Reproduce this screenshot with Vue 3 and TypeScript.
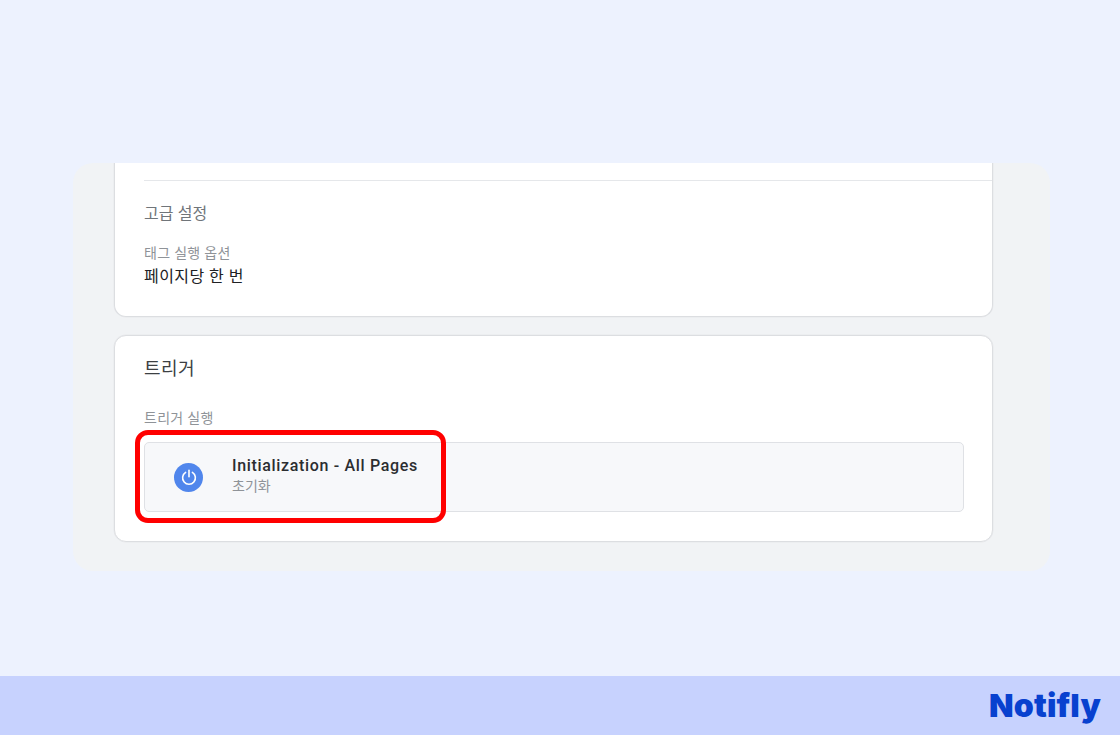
<script setup lang="ts">
const title: string = 'Initialization - All Pages'
</script>

<template>
  <div class="page">
    <main class="main">
      <section class="panel">
        <div class="card first">
          <div class="divider"></div>
          <h3 class="sub">고급 설정</h3>
          <div class="label opt">태그 실행 옵션</div>
          <div class="value">페이지당 한 번</div>
        </div>
        <div class="card second">
          <h2 class="heading">트리거</h2>
          <div class="label run">트리거 실행</div>
          <div class="row">
            <span class="badge">
              <svg width="18" height="18" viewBox="0 0 18 18" fill="none" stroke="#fff" stroke-width="1.6" stroke-linecap="round">
                <path d="M9 2.4v6.4" />
                <path d="M5.6 4.4a6.4 6.4 0 1 0 6.8 0" />
              </svg>
            </span>
            <div class="text">
              <div class="name">{{ title }}</div>
              <div class="type">초기화</div>
            </div>
            <div class="mark"></div>
          </div>
        </div>
      </section>
    </main>
    <footer class="footer">
      <span class="logo">Notifly</span>
    </footer>
  </div>
</template>

<style scoped>
.page {
  width: 1120px;
  height: 735px;
  display: flex;
  flex-direction: column;
  background: #edf2fe;
  font-family: Roboto, "Noto Sans CJK KR", sans-serif;
  overflow: hidden;
}
.main {
  flex: 1;
  padding: 163px 70px 0 73px;
}
.panel {
  height: 408px;
  box-sizing: border-box;
  background: #f1f3f5;
  border-radius: 20px;
  padding: 0 57px 0 41px;
}
.card {
  background: #fff;
  border: 1px solid #dcdee1;
  box-shadow: 0 0 0 0.5px #e8e9ec;
  box-sizing: border-box;
  border-radius: 12px;
}
.first {
  height: 154px;
  border-top: 0;
  border-radius: 0 0 12px 12px;
  clip-path: inset(0 -2px -2px -2px);
  padding: 17px 0 0 29px;
}
.second {
  margin-top: 18px;
  height: 207px;
  padding: 21px 28px 0 29px;
}
.divider {
  height: 1px;
  background: #e5e7ea;
}
.sub {
  margin: 23px 0 0;
  font-size: 16px;
  line-height: 20px;
  font-weight: 400;
  letter-spacing: 0.1px;
  color: #70757a;
}
.label {
  font-size: 14px;
  line-height: 18px;
  letter-spacing: 0.3px;
  color: #8f9398;
}
.opt { margin-top: 20px; }
.value {
  margin-top: 4px;
  font-size: 16px;
  line-height: 22px;
  letter-spacing: 0.45px;
  color: #202124;
}
.heading {
  margin: 0;
  font-size: 18px;
  line-height: 24px;
  font-weight: 400;
  letter-spacing: 0.4px;
  color: #3c4043;
}
.run { margin-top: 28px; }
.row {
  margin-top: 15px;
  height: 70px;
  box-sizing: border-box;
  display: flex;
  align-items: center;
  background: #f7f8fa;
  border: 1px solid #dfe1e5;
  border-radius: 5px;
  padding-left: 29px;
  position: relative;
}
.badge {
  width: 29px;
  height: 29px;
  border-radius: 50%;
  background: #5086ec;
  display: flex;
  align-items: center;
  justify-content: center;
  flex: none;
}
.text {
  margin-left: 29px;
  padding-bottom: 3px;
}
.name {
  font-size: 16px;
  line-height: 20px;
  font-weight: 500;
  letter-spacing: 0.67px;
  color: #2b2d30;
}
.type {
  font-size: 14px;
  line-height: 18px;
  margin-top: 1px;
  color: #8f9398;
}
.mark {
  position: absolute;
  left: -10px;
  top: -13px;
  width: 311px;
  height: 93px;
  box-sizing: border-box;
  border: 5px solid #ff0000;
  border-radius: 13px;
}
.footer {
  height: 59px;
  flex: none;
  background: #c7d2fe;
  display: flex;
  align-items: center;
  justify-content: flex-end;
  padding-right: 19px;
}
.logo {
  font-family: Inter, Roboto, sans-serif;
  font-weight: 900;
  font-size: 32px;
  line-height: 38px;
  letter-spacing: 0.2px;
  color: #0841cf;
}
</style>
